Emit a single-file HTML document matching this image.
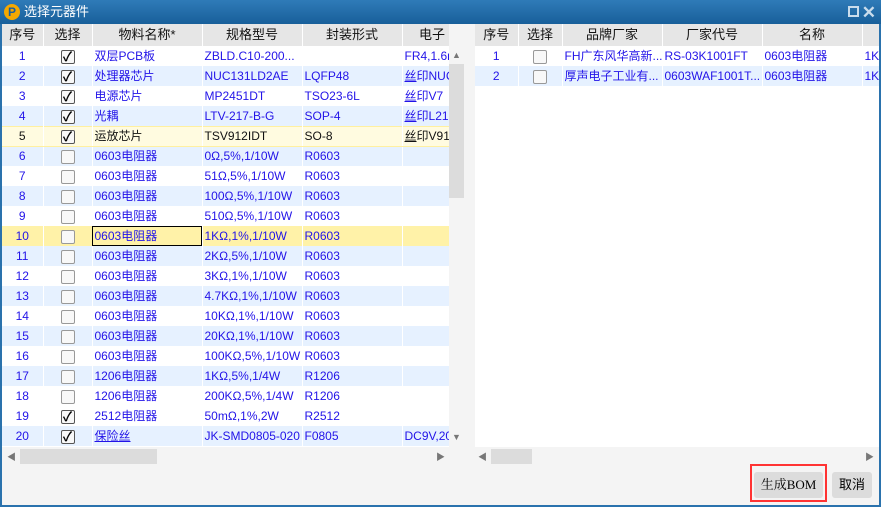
<!DOCTYPE html>
<html><head><meta charset="utf-8"><style>
*{margin:0;padding:0;box-sizing:border-box}
body{width:881px;height:507px;overflow:hidden;background:#2a72ad;font-family:"Liberation Sans","Noto Sans CJK SC",sans-serif;font-size:12px;position:relative}
.title{position:absolute;left:0;top:0;width:881px;height:24px;background:linear-gradient(#2f7bb8,#185f9a);color:#fff;font-size:13px;line-height:24px;padding-left:24px}
.logo{position:absolute;left:4px;top:4px;width:16px;height:16px;border-radius:50%;background:#f5a800;color:#1b5e9a;font-weight:bold;font-size:12px;line-height:16px;text-align:center}
.body{position:absolute;left:2px;top:24px;width:877px;height:481px;background:#f4f4f4}
table{border-collapse:collapse;table-layout:fixed;position:absolute;background:#fff}
td,th{height:20px;line-height:18px;white-space:nowrap;overflow:hidden;padding:0 2px;border-right:1px solid #fff;color:#2213e8;vertical-align:middle}
th{height:22px;background:#e6e6e6;color:#111;font-weight:normal;font-size:13px;text-align:center}
tr.a td{background:#e6f1ff}
tr.y td{background:#fffbe0;border-top:1px solid #fff0a0;border-bottom:1px solid #fff0a0;color:#111}
tr.h td{background:#fff2a8}
.c{text-align:center}
.cb{display:inline-block;width:14px;height:14px;border:1px solid #555;border-radius:2px;background:#f8f8f8;vertical-align:middle;font-size:13px;line-height:12px;color:#000;font-weight:bold}
.cb.u{border-color:#999}
.wrap{position:absolute;overflow:hidden;background:#fff}
</style></head><body>
<div class="title"><div class="logo">P</div>选择元器件
<div style="position:absolute;right:22px;top:6px;width:11px;height:11px;border:2px solid #c9dcec;"></div>
<div style="position:absolute;right:5px;top:1px;color:#c9dcec;font-size:17px;font-weight:bold">✕</div></div>
<div class="body"></div>
<div class="wrap" style="left:2px;top:24px;width:447px;height:423px">
<table style="left:0;top:0;width:460px">
<colgroup><col style="width:41px"><col style="width:49px"><col style="width:110px"><col style="width:100px"><col style="width:100px"><col style="width:60px"></colgroup>
<tr><th>序号</th><th>选择</th><th>物料名称*</th><th>规格型号</th><th>封装形式</th><th>电子</th></tr>
<tr><td class="c">1</td><td class="c"><span class="cb">✓</span></td><td>双层PCB板</td><td>ZBLD.C10-200...</td><td></td><td>FR4,1.6m</td></tr>
<tr class="a"><td class="c">2</td><td class="c"><span class="cb">✓</span></td><td>处理器芯片</td><td>NUC131LD2AE</td><td>LQFP48</td><td><u>丝</u>印NUC</td></tr>
<tr><td class="c">3</td><td class="c"><span class="cb">✓</span></td><td>电源芯片</td><td>MP2451DT</td><td>TSO23-6L</td><td><u>丝</u>印V7</td></tr>
<tr class="a"><td class="c">4</td><td class="c"><span class="cb">✓</span></td><td>光耦</td><td>LTV-217-B-G</td><td>SOP-4</td><td><u>丝</u>印L21</td></tr>
<tr class="y"><td class="c">5</td><td class="c"><span class="cb">✓</span></td><td>运放芯片</td><td>TSV912IDT</td><td>SO-8</td><td><u>丝</u>印V91</td></tr>
<tr class="a"><td class="c">6</td><td class="c"><span class="cb u"></span></td><td>0603电阻器</td><td>0Ω,5%,1/10W</td><td>R0603</td><td></td></tr>
<tr><td class="c">7</td><td class="c"><span class="cb u"></span></td><td>0603电阻器</td><td>51Ω,5%,1/10W</td><td>R0603</td><td></td></tr>
<tr class="a"><td class="c">8</td><td class="c"><span class="cb u"></span></td><td>0603电阻器</td><td>100Ω,5%,1/10W</td><td>R0603</td><td></td></tr>
<tr><td class="c">9</td><td class="c"><span class="cb u"></span></td><td>0603电阻器</td><td>510Ω,5%,1/10W</td><td>R0603</td><td></td></tr>
<tr class="h"><td class="c">10</td><td class="c"><span class="cb u"></span></td><td style="outline:1px solid #000;outline-offset:-1px">0603电阻器</td><td>1KΩ,1%,1/10W</td><td>R0603</td><td></td></tr>
<tr class="a"><td class="c">11</td><td class="c"><span class="cb u"></span></td><td>0603电阻器</td><td>2KΩ,5%,1/10W</td><td>R0603</td><td></td></tr>
<tr><td class="c">12</td><td class="c"><span class="cb u"></span></td><td>0603电阻器</td><td>3KΩ,1%,1/10W</td><td>R0603</td><td></td></tr>
<tr class="a"><td class="c">13</td><td class="c"><span class="cb u"></span></td><td>0603电阻器</td><td>4.7KΩ,1%,1/10W</td><td>R0603</td><td></td></tr>
<tr><td class="c">14</td><td class="c"><span class="cb u"></span></td><td>0603电阻器</td><td>10KΩ,1%,1/10W</td><td>R0603</td><td></td></tr>
<tr class="a"><td class="c">15</td><td class="c"><span class="cb u"></span></td><td>0603电阻器</td><td>20KΩ,1%,1/10W</td><td>R0603</td><td></td></tr>
<tr><td class="c">16</td><td class="c"><span class="cb u"></span></td><td>0603电阻器</td><td>100KΩ,5%,1/10W</td><td>R0603</td><td></td></tr>
<tr class="a"><td class="c">17</td><td class="c"><span class="cb u"></span></td><td>1206电阻器</td><td>1KΩ,5%,1/4W</td><td>R1206</td><td></td></tr>
<tr><td class="c">18</td><td class="c"><span class="cb u"></span></td><td>1206电阻器</td><td>200KΩ,5%,1/4W</td><td>R1206</td><td></td></tr>
<tr><td class="c">19</td><td class="c"><span class="cb">✓</span></td><td>2512电阻器</td><td>50mΩ,1%,2W</td><td>R2512</td><td></td></tr>
<tr class="a"><td class="c">20</td><td class="c"><span class="cb">✓</span></td><td><u>保险丝</u></td><td>JK-SMD0805-020</td><td>F0805</td><td>DC9V,20</td></tr>
</table></div>
<div style="position:absolute;left:449px;top:46px;width:16px;height:401px;background:#f4f4f4"></div>
<div style="position:absolute;left:449px;top:64px;width:15px;height:134px;background:#dcdcdc"></div>
<div style="position:absolute;left:452px;top:50px;color:#777;font-size:9px">▲</div>
<div style="position:absolute;left:452px;top:432px;color:#777;font-size:9px">▼</div>
<div style="position:absolute;left:20px;top:449px;width:137px;height:15px;background:#dcdcdc"></div>
<div style="position:absolute;left:7px;top:450px;color:#777;font-size:9px">◀</div>
<div style="position:absolute;left:436px;top:450px;color:#777;font-size:9px">▶</div>

<div class="wrap" style="left:475px;top:24px;width:404px;height:423px">
<table style="left:0;top:0;width:420px">
<colgroup><col style="width:43px"><col style="width:44px"><col style="width:100px"><col style="width:100px"><col style="width:100px"><col style="width:33px"></colgroup>
<tr><th>序号</th><th>选择</th><th>品牌厂家</th><th>厂家代号</th><th>名称</th><th></th></tr>
<tr><td class="c">1</td><td class="c"><span class="cb u"></span></td><td>FH广东风华高新...</td><td>RS-03K1001FT</td><td>0603电阻器</td><td>1K</td></tr>
<tr class="a"><td class="c">2</td><td class="c"><span class="cb u"></span></td><td>厚声电子工业有...</td><td>0603WAF1001T...</td><td>0603电阻器</td><td>1K</td></tr>
</table></div>
<div style="position:absolute;left:475px;top:447px;width:404px;height:18px;background:#f4f4f4"></div>
<div style="position:absolute;left:491px;top:449px;width:41px;height:15px;background:#dcdcdc"></div>
<div style="position:absolute;left:478px;top:450px;color:#777;font-size:9px">◀</div>
<div style="position:absolute;left:865px;top:450px;color:#777;font-size:9px">▶</div>

<div style="position:absolute;left:750px;top:464px;width:77px;height:38px;border:2px solid #ff3333"></div>
<div style="position:absolute;left:754px;top:472px;width:69px;height:26px;background:#dcdcdc;border-radius:3px;font-family:'Liberation Serif','Noto Serif CJK SC',serif;font-size:13px;line-height:26px;text-align:center;color:#000">生成BOM</div>
<div style="position:absolute;left:832px;top:472px;width:40px;height:26px;background:#dcdcdc;border-radius:3px;font-size:13px;line-height:26px;text-align:center;color:#000">取消</div>
</body></html>
